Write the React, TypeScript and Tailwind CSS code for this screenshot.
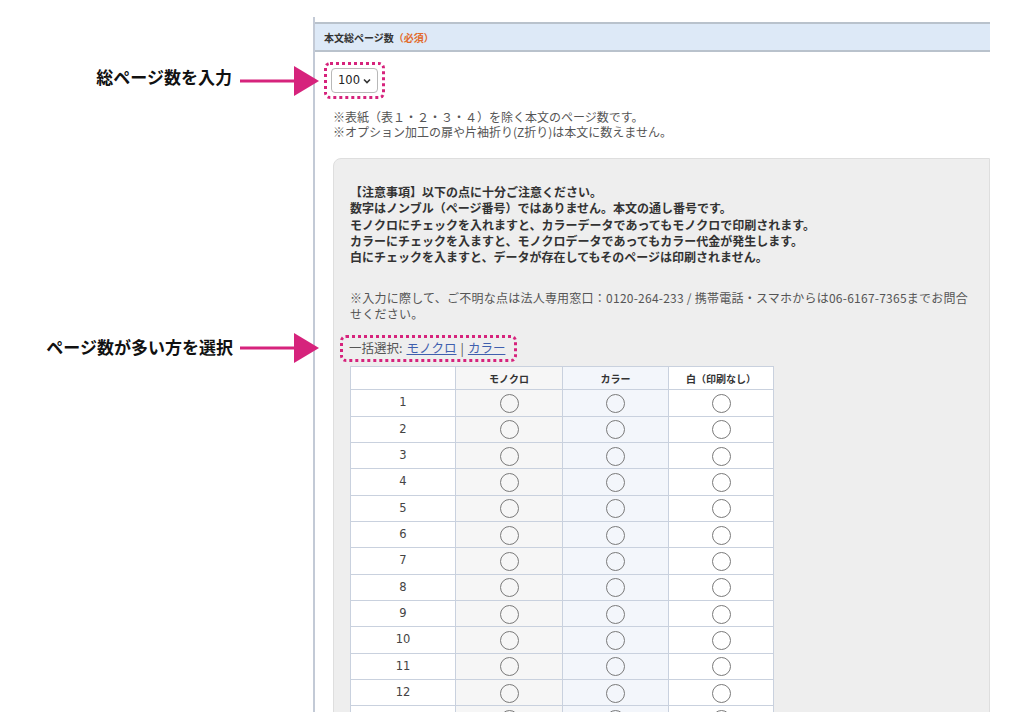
const pink = "#d6237c";

function Arrow() {
  return (
    <svg width="80" height="30" viewBox="0 0 80 30">
      <line x1="0" y1="15" x2="58" y2="15" stroke={pink} strokeWidth="3" />
      <polygon points="54,0 79,15 54,30" fill={pink} />
    </svg>
  );
}

function Radio() {
  return <span className="inline-block h-[19px] w-[19px] rounded-full border-[1.5px] border-[#7a7a7a] align-middle" />;
}

const rows = Array.from({ length: 14 }, (_, i) => i + 1);

export default function App() {
  return (
    <div className="relative h-[712px] w-[1024px] overflow-hidden bg-white font-['Noto_Sans_CJK_JP','Noto_Sans',sans-serif] text-[#333]">
      {/* callouts */}
      <div className="absolute right-[792px] top-[64px] whitespace-nowrap text-[17px] font-bold leading-[26px] text-[#111]">
        総ページ数を入力
      </div>
      <div className="absolute left-[240px] top-[66px]">
        <Arrow />
      </div>
      <div className="absolute right-[791px] top-[334px] whitespace-nowrap text-[17px] font-bold leading-[26px] text-[#111]">
        ページ数が多い方を選択
      </div>
      <div className="absolute left-[240px] top-[333px]">
        <Arrow />
      </div>

      <div className="ml-[313px] mt-[17px] min-h-[695px] w-[677px] border-l-2 border-[#c3cad6] pt-[5px]">
        <div className="flex h-[30px] items-center border-y-2 border-[#b9c2cc] bg-[#dde9f7] pl-[9px] text-[10px] font-bold">
          本文総ページ数<span className="text-[#e2692b]">（必須）</span>
        </div>

        <div className="pl-[9px] pt-[10px]">
          <div className="inline-flex rounded-[6px] border-[3px] border-dotted border-[#d6237c] px-[4px] py-[3px]">
            <div className="flex h-[25px] w-[47px] items-center justify-between rounded-[4px] border border-[#b8b8b8] bg-white pl-[6px] pr-[6px] font-['DejaVu_Sans',sans-serif] text-[11.5px] text-[#222]">
              100
              <svg width="8" height="6" viewBox="0 0 8 6">
                <path d="M1 1.5 L4 4.5 L7 1.5" fill="none" stroke="#333" strokeWidth="1.6" />
              </svg>
            </div>
          </div>
        </div>

        <div className="pl-[18px] pt-[10px] text-[12px] leading-[15px] text-[#555]">
          <p>※表紙（表１・２・３・４）を除く本文のページ数です。</p>
          <p>※オプション加工の扉や片袖折り(Z折り)は本文に数えません。</p>
        </div>

        <div className="ml-[18px] mt-[19px] rounded-tl-[8px] border border-[#dedede] bg-[#eeeeee] pb-[20px] pl-[16px] pt-[25px]">
          <p className="text-[12px] font-bold leading-[16.25px] text-[#333]">
            【注意事項】以下の点に十分ご注意ください。
            <br />
            数字はノンブル（ページ番号）ではありません。本文の通し番号です。
            <br />
            モノクロにチェックを入れますと、カラーデータであってもモノクロで印刷されます。
            <br />
            カラーにチェックを入ますと、モノクロデータであってもカラー代金が発生します。
            <br />
            白にチェックを入ますと、データが存在してもそのページは印刷されません。
          </p>

          <p className="mt-[25px] whitespace-nowrap text-[12px] leading-[16px] tracking-[0.02em] text-[#555]">
            ※入力に際して、ご不明な点は法人専用窓口：0120-264-233 / 携帯電話・スマホからは06-6167-7365までお問合
            <br />
            せください。
          </p>

          <div className="-ml-[10px] mt-[13px] inline-flex h-[27px] items-center gap-[4px] rounded-[6px] border-[3px] border-dotted border-[#d6237c] pl-[6px] pr-[9px] text-[12.5px] text-[#555]">
            <span>一括選択:</span>
            <span className="text-[#3f5fae] underline">モノクロ</span>
            <span>|</span>
            <span className="text-[#3f5fae] underline">カラー</span>
          </div>

          <table className="mt-[4px] border-collapse bg-white">
            <thead>
              <tr className="h-[23px] text-[10px] font-bold">
                <th className="w-[105px] border border-[#c9d1de] bg-white" />
                <th className="w-[107px] border border-[#c9d1de] bg-[#f6f6f6]">モノクロ</th>
                <th className="w-[106px] border border-[#c9d1de] bg-[#f3f6fb]">カラー</th>
                <th className="w-[105px] border border-[#c9d1de] bg-white">白（印刷なし）</th>
              </tr>
            </thead>
            <tbody>
              {rows.map((n) => (
                <tr key={n} className="h-[26.33px]">
                  <td className="border border-[#c9d1de] bg-white text-center font-['DejaVu_Sans',sans-serif] text-[11.5px] text-[#444]">
                    {n}
                  </td>
                  <td className="border border-[#c9d1de] bg-[#f6f6f6] text-center leading-none">
                    <Radio />
                  </td>
                  <td className="border border-[#c9d1de] bg-[#f3f6fb] text-center leading-none">
                    <Radio />
                  </td>
                  <td className="border border-[#c9d1de] bg-white text-center leading-none">
                    <Radio />
                  </td>
                </tr>
              ))}
            </tbody>
          </table>
        </div>
      </div>
    </div>
  );
}
